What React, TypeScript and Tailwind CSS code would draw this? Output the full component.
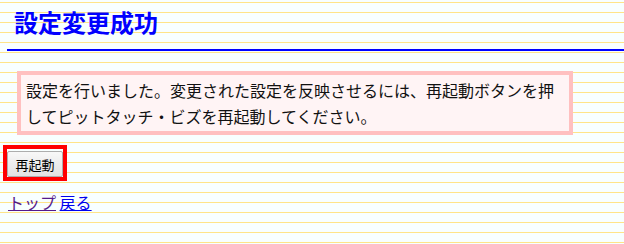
import React from 'react';

const App = () => {
  return (
    <div className="min-h-screen bg-[#f8ffff] bg-[linear-gradient(to_bottom,transparent_2px,#ffe488_2px,#ffe488_3px,transparent_3px)] bg-[length:100%_10px] font-['Noto_Sans_CJK_JP','Noto_Sans',sans-serif] text-black">
      {/* Title */}
      <h1 className="ml-[7px] pl-[7px] pt-[6px] pb-[11px] border-b-2 border-[#0000ff] text-[24px] leading-[32px] font-bold text-[#0000ff]">
        設定変更成功
      </h1>

      {/* Message box */}
      <div className="mt-[20px] ml-[17px] w-[556px] border-4 border-[#ffc0c0] bg-[#fff4f5] px-[5px] py-[2px] text-[16px] leading-[26px] text-[#111]">
        設定を行いました。変更された設定を反映させるには、再起動ボタンを押してピットタッチ・ビズを再起動してください。
      </div>

      {/* Restart button */}
      <div className="mt-[10px] ml-[3px] w-[64px] border-4 border-[#ff0000] pt-[2px]">
        <button className="block w-full h-[26px] border border-[#adadad] rounded-[2px] bg-gradient-to-b from-[#f8f8f8] to-[#e2e2e2] text-[13px] leading-none text-black">
          再起動
        </button>
      </div>

      {/* Links */}
      <div className="mt-[9px] ml-[8px] text-[16px] leading-[24px]">
        <a href="#" className="underline text-[#551a8b]">トップ</a>{' '}
        <a href="#" className="underline text-[#0000ee]">戻る</a>
      </div>
    </div>
  );
};

export default App;
